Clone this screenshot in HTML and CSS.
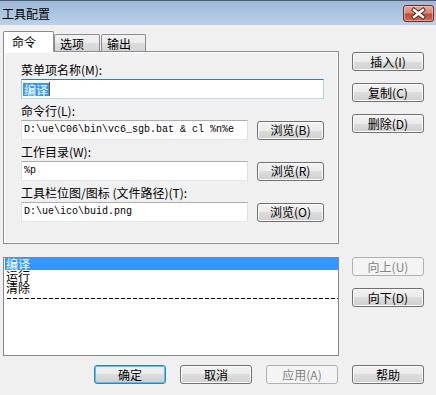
FILE: index.html
```html
<!DOCTYPE html>
<html lang="zh-CN">
<head>
<meta charset="utf-8">
<title>工具配置</title>
<link rel="stylesheet" href="styles.css">
</head>
<body>
<div class="window">
  <div class="titlebar">
    <span class="title">工具配置</span>
    <button class="close" aria-label="关闭">
      <svg width="31" height="17" viewBox="0 0 31 17">
        <path d="M11 5 L20 12 M20 5 L11 12" stroke="#3e2a28" stroke-width="4.2" stroke-linecap="square" fill="none"/>
        <path d="M11 5 L20 12 M20 5 L11 12" stroke="#ffffff" stroke-width="2.4" stroke-linecap="square" fill="none"/>
      </svg>
    </button>
  </div>
  <div class="body">
    <div class="tabs-area">
      <div class="tabstrip">
        <div class="tab active">命令</div>
        <div class="tab t2">选项</div>
        <div class="tab t3">输出</div>
      </div>
      <div class="panel">
        <div class="field">
          <div class="label">菜单项名称(M):</div>
          <div class="input focus"><span class="sel">编译</span><span class="caret"></span></div>
        </div>
        <div class="field">
          <div class="label">命令行(L):</div>
          <div class="row">
            <div class="input mono">D:\ue\C06\bin\vc6_sgb.bat &amp; cl %n%e</div>
            <button class="btn browse">浏览(B)</button>
          </div>
        </div>
        <div class="field">
          <div class="label">工作目录(W):</div>
          <div class="row">
            <div class="input mono">%p</div>
            <button class="btn browse">浏览(R)</button>
          </div>
        </div>
        <div class="field">
          <div class="label">工具栏位图/图标 (文件路径)(T):</div>
          <div class="row">
            <div class="input mono">D:\ue\ico\buid.png</div>
            <button class="btn browse">浏览(O)</button>
          </div>
        </div>
      </div>
    </div>
    <div class="side side-top">
      <button class="btn">插入(I)</button>
      <button class="btn">复制(C)</button>
      <button class="btn">删除(D)</button>
    </div>
    <div class="list">
      <div class="item selected">编译</div>
      <div class="item">运行</div>
      <div class="item">清除</div>
      <div class="sep"></div>
    </div>
    <div class="side side-list">
      <button class="btn disabled">向上(U)</button>
      <button class="btn">向下(D)</button>
    </div>
    <div class="footer">
      <button class="btn default">确定</button>
      <button class="btn">取消</button>
      <button class="btn disabled">应用(A)</button>
      <button class="btn">帮助</button>
    </div>
  </div>
</div>
</body>
</html>
```

FILE: styles.css
```css
* { box-sizing: border-box; }
html, body { margin: 0; padding: 0; }
body {
  width: 436px;
  height: 395px;
  overflow: hidden;
  background: #f0f0f0;
  font-family: "Noto Sans CJK SC", "Liberation Sans", sans-serif;
  font-size: 12px;
  color: #000;
}
.window { width: 436px; height: 395px; background: #f0f0f0; }

.titlebar {
  height: 25px;
  display: flex;
  justify-content: space-between;
  align-items: flex-start;
  border-top: 1px solid #4e5b6b;
  background: linear-gradient(#9db8d7, #bbd1ea);
  padding-left: 2px;
  padding-right: 2px;
}
.title { line-height: 24px; padding-top: 1px; font-size: 12px; color: #000; }
.close {
  margin-top: 4px;
  width: 31px;
  height: 17px;
  padding: 0;
  border: 1px solid #6a2c24;
  border-radius: 3px;
  background: linear-gradient(#e3a89c 0%, #d88a78 45%, #c34a33 55%, #cf6b52 100%);
  box-shadow: inset 0 0 0 1px rgba(255,220,210,0.5);
  display: flex;
}
.close svg { display: block; margin: -1px; }

.body {
  display: grid;
  grid-template-columns: 336px 72px;
  column-gap: 13px;
  padding: 6px 0 0 3px;
}

.tabstrip { display: flex; align-items: flex-end; height: 20px; }
.tab {
  height: 17px;
  border: 1px solid #898c95;
  border-bottom: none;
  border-radius: 2px 2px 0 0;
  background: linear-gradient(#f2f2f2 0%, #ebebeb 50%, #dddddd 50%, #d4d4d4 100%);
  line-height: 14px;
  padding: 2px 0 0 5px;
}
.tab.active {
  height: 21px;
  width: 51px;
  margin-bottom: -1px;
  position: relative;
  z-index: 1;
  background: #ffffff;
  padding: 3px 0 0 8px;
}
.tab.t2 { width: 46px; }
.tab.t3 { width: 45px; margin-left: 1px; }

.panel {
  height: 193px;
  border: 1px solid #898c95;
  background: #f0f0f0;
  box-shadow: inset 1px 1px 0 #ffffff, inset -1px -1px 0 #ffffff;
  padding: 11px 14px 0 17px;
  display: flex;
  flex-direction: column;
  gap: 5px;
}
.label { line-height: 14px; height: 14px; margin-bottom: 2px; white-space: nowrap; }
.row { display: flex; align-items: center; gap: 9px; }
.input {
  height: 20px;
  background: #fff;
  border: 1px solid;
  border-color: #abadb3 #dbdfe6 #e3e9ef #e2e3ea;
  padding: 0 0 0 2px;
  line-height: 18px;
  white-space: nowrap;
  overflow: hidden;
  display: flex;
  align-items: center;
}
.row .input { flex: 1; }
.input.mono { font-family: "Liberation Mono", monospace; font-size: 10px; padding-left: 2px; }
.input.focus { border-color: #3d7bad #b5cfe7 #b7d9ed #a4c9e3; padding-left: 1px; }
.sel { background: #3399ff; color: #fff; line-height: 13px; height: 13px; padding: 0 1px; }
.caret { width: 1px; height: 14px; background: #7a4a2a; }

.btn {
  display: block;
  height: 19px;
  width: 72px;
  padding: 0;
  border: 1px solid #707070;
  border-radius: 3px;
  background: linear-gradient(#f2f2f2 0%, #ebebeb 50%, #dddddd 50%, #cfcfcf 100%);
  box-shadow: inset 0 0 0 1px #fbfbfb;
  font-family: "Noto Sans CJK SC", "Liberation Sans", sans-serif;
  font-size: 12px;
  line-height: 16px;
  color: #000;
  text-align: center;
}
.btn.browse { width: 67px; }
.btn.disabled {
  border-color: #adb2b5;
  background: #f4f4f4;
  box-shadow: none;
  color: #838383;
}
.btn.default {
  border-color: #3c7fb1;
  box-shadow: inset 0 0 0 1px #48c8f0;
}

.side { display: flex; flex-direction: column; gap: 12px; }
.side-top { padding-top: 21px; }
.side-list { margin-top: 13px; }

.list {
  margin-top: 13px;
  height: 99px;
  background: #fff;
  border: 1px solid #828790;
  padding: 0 0 0 1px;
}
.item { height: 12px; line-height: 12px; padding-left: 1px; white-space: nowrap; }
.item.selected { background: #3399ff; color: #fff; }
.sep {
  height: 1px;
  margin: 4px 0 0 2px;
  background: repeating-linear-gradient(90deg, #000 0 4px, transparent 4px 6px);
}

.footer {
  grid-column: 1 / -1;
  display: flex;
  justify-content: flex-end;
  gap: 14px;
  margin-top: 9px;
}
```
